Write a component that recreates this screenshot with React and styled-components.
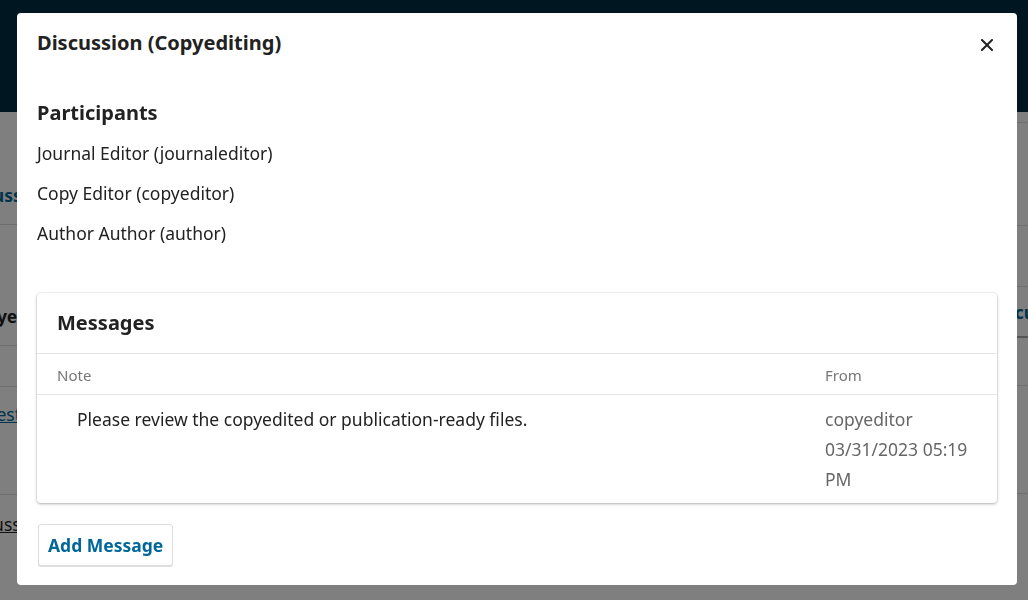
import styled, { createGlobalStyle } from 'styled-components';

const GlobalStyle = createGlobalStyle`
    html, body {
        margin: 0;
        padding: 0;
        height: 100%;
        overflow: hidden;
        background: #fff;
    }
    body {
        font-family: "Noto Sans", "Open Sans", sans-serif;
        color: #222;
    }
`;

// page behind the modal
const Page = styled.div`
    height: 600px;
    overflow: hidden;
`;
const PageHeader = styled.div`
    height: 112px;
    background: #002c40;
`;
const PageBody = styled.div`
    display: grid;
    grid-template-columns: 1fr 1fr;
`;
const PageCol = styled.div`
    display: flex;
    flex-direction: column;
    min-width: 0;
`;
const PageRow = styled.div`
    height: ${props => props.h}px;
    flex-shrink: 0;
    border-bottom: ${props => props.line ? '1px solid #ddd' : 'none'};
    display: flex;
    align-items: ${props => props.align || 'center'};
    font-size: 17.5px;
    white-space: nowrap;
`;
const PageText = styled.span`
    margin-left: ${props => props.shift || 0}px;
    margin-top: ${props => props.top || 0}px;
    font-weight: ${props => props.bold ? 700 : 400};
    color: ${props => props.blue ? '#006798' : '#222'};
    text-decoration: ${props => props.link ? 'underline' : 'none'};
`;
const PageButton = styled.span`
    display: flex;
    align-items: center;
    height: 49px;
    padding: 0 12px;
    margin-left: 461px;
    border: 1px solid #ddd;
    border-bottom: 2px solid #aaa;
    font-weight: 700;
    color: #006798;
`;

const Overlay = styled.div`
    position: fixed;
    inset: 0;
    background: rgba(0, 0, 0, 0.5);
    display: flex;
    align-items: flex-start;
    padding: 13px 0 0 17px;
`;

const Modal = styled.div`
    width: 1000px;
    height: 572px;
    box-sizing: border-box;
    background: #fff;
    border-radius: 4px;
    display: flex;
    flex-direction: column;
`;
const ModalHeader = styled.div`
    display: flex;
    justify-content: space-between;
    align-items: center;
    padding: 16px 20px;
`;
const ModalTitle = styled.h2`
    margin: 0;
    font-size: 20px;
    line-height: 28px;
    font-weight: 700;
    color: #222;
`;
const CloseButton = styled.button`
    border: none;
    background: none;
    padding: 0;
    width: 20px;
    height: 20px;
    margin-top: 4px;
    display: flex;
    align-items: center;
    justify-content: center;
    cursor: pointer;
`;
const ModalBody = styled.div`
    padding: 0 20px 21px;
`;
const SectionTitle = styled.h3`
    margin: 26px 0 6px;
    font-size: 20px;
    line-height: 28px;
    font-weight: 700;
`;
const Participant = styled.div`
    font-size: 17.5px;
    line-height: 40px;
    color: #222;
`;

const Card = styled.div`
    margin-top: 40px;
    border-radius: 4px;
    background: #fff;
    box-shadow: 0 0 0 1px rgba(0, 0, 0, 0.03), 0 1px 3px rgba(0, 0, 0, 0.3);
`;
const CardHeader = styled.div`
    padding: 16px 20px;
    border-bottom: 1px solid #e5e5e5;
`;
const CardTitle = styled.h3`
    margin: 0;
    font-size: 20px;
    line-height: 28px;
    font-weight: 700;
`;
const TableRow = styled.div`
    display: grid;
    grid-template-columns: 1fr 172px;
    border-bottom: ${props => props.head ? '1px solid #e5e5e5' : 'none'};
    padding: ${props => props.head ? '11px 0 8px' : '9px 0 9px'};
`;
const HeadCell = styled.div`
    font-size: 15px;
    line-height: 21px;
    color: #777;
    padding-left: ${props => props.indent}px;
`;
const Cell = styled.div`
    font-size: 17.5px;
    line-height: 30px;
    color: ${props => props.muted ? '#666' : '#222'};
    padding-left: ${props => props.indent}px;
    padding-right: ${props => props.pr || 0}px;
`;

const AddButton = styled.button`
    margin-top: 21px;
    margin-left: 1px;
    height: 42px;
    padding: 0 9px;
    font-family: inherit;
    font-size: 17.5px;
    font-weight: 700;
    color: #006798;
    background: #fff;
    border: 1px solid #ddd;
    border-radius: 3px;
    box-shadow: 0 1px 0 #ddd;
    cursor: pointer;
`;

const CloseIcon = () => (
    <svg width="12" height="12" viewBox="0 0 12 12">
        <path d="M1 1 L11 11 M11 1 L1 11" stroke="#222" strokeWidth="2" strokeLinecap="square" />
    </svg>
);

const participants = [
    'Journal Editor (journaleditor)',
    'Copy Editor (copyeditor)',
    'Author Author (author)',
];

const App = () => {
    return (
        <>
            <GlobalStyle />
            <Page>
                <PageHeader />
                <PageBody>
                    <PageCol>
                        <PageRow h={112} line><PageText bold blue shift={-43} top={54}>Discussions</PageText></PageRow>
                        <PageRow h={120} line><PageText bold shift={-36} top={62}>Copyediting</PageText></PageRow>
                        <PageRow h={40} line />
                        <PageRow h={107} line align="flex-start"><PageText link blue shift={-28} top={15}>Questions</PageText></PageRow>
                        <PageRow h={60} align="flex-start"><PageText link shift={-41} top={17}>Discussion</PageText></PageRow>
                    </PageCol>
                    <PageCol>
                        <PageRow h={10} line />
                        <PageRow h={102} line />
                        <PageRow h={60} />
                        <PageRow h={52}><PageButton>Discussion</PageButton></PageRow>
                        <PageRow h={47} line />
                        <PageRow h={107} line />
                    </PageCol>
                </PageBody>
            </Page>
            <Overlay>
                <Modal>
                    <ModalHeader>
                        <ModalTitle>Discussion (Copyediting)</ModalTitle>
                        <CloseButton aria-label="Close"><CloseIcon /></CloseButton>
                    </ModalHeader>
                    <ModalBody>
                        <SectionTitle>Participants</SectionTitle>
                        {participants.map(p => <Participant key={p}>{p}</Participant>)}
                        <Card>
                            <CardHeader>
                                <CardTitle>Messages</CardTitle>
                            </CardHeader>
                            <TableRow head>
                                <HeadCell indent={20}>Note</HeadCell>
                                <HeadCell indent={0}>From</HeadCell>
                            </TableRow>
                            <TableRow>
                                <Cell indent={40}>Please review the copyedited or publication-ready files.</Cell>
                                <Cell muted indent={0} pr={10}>copyeditor<br />03/31/2023 05:19 PM</Cell>
                            </TableRow>
                        </Card>
                        <AddButton>Add Message</AddButton>
                    </ModalBody>
                </Modal>
            </Overlay>
        </>
    );
};

export default App;
